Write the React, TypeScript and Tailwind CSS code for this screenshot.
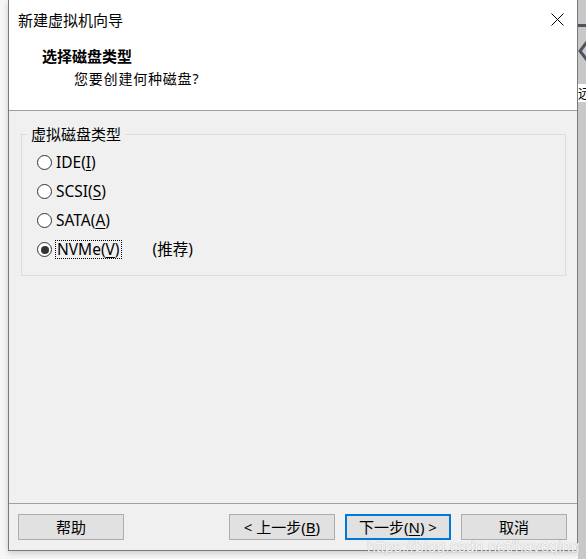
import React from 'react';

const font = { fontFamily: '"Noto Sans", "Noto Sans CJK SC", sans-serif' };

function Radio({ checked, children }: { checked?: boolean; children: React.ReactNode }) {
  return (
    <div className="flex h-[29px] items-center pl-[15px]">
      <span className="flex h-[15px] w-[15px] items-center justify-center rounded-full border border-[#333333] bg-white">
        {checked && <span className="h-[8px] w-[8px] rounded-full bg-[#333333]" />}
      </span>
      <span className="ml-[4px] flex items-center text-[15.5px] leading-none text-black">{children}</span>
    </div>
  );
}

function Btn({ children, primary }: { children: React.ReactNode; primary?: boolean }) {
  return (
    <button
      className={
        'flex h-[26px] w-[106px] items-center justify-center bg-[#e1e1e1] text-[15px] leading-none text-black ' +
        (primary ? 'border-2 border-[#0078d7]' : 'border border-[#adadad]')
      }
    >
      {children}
    </button>
  );
}

export default function App() {
  return (
    <div className="relative flex h-[559px] w-[586px] overflow-hidden bg-[#f6f6f6]" style={font}>
      <div className="w-[8px] shrink-0" />

      {/* Dialog */}
      <div className="flex h-[551px] w-[570px] shrink-0 flex-col border-x border-b border-[#7a7a7a] shadow-[0_2px_6px_rgba(0,0,0,0.18)]">
        {/* Header */}
        <div className="h-[111px] shrink-0 border-b border-[#a0a0a0] bg-white">
          <div className="flex h-[40px] items-center justify-between pl-[9px] pr-[13px]">
            <span className="text-[15px] leading-none text-black">新建虚拟机向导</span>
            <svg width="13" height="13" viewBox="0 0 13 13" className="mt-[-2px]">
              <path d="M0.5 0.5 L12.5 12.5 M12.5 0.5 L0.5 12.5" stroke="#000" strokeWidth="1" fill="none" />
            </svg>
          </div>
          <div className="mt-[6px] pl-[33px] text-[15px] font-bold leading-[20px] text-black">选择磁盘类型</div>
          <div className="mt-[3px] pl-[65px] text-[14px] leading-[20px] tracking-[0.8px] text-black">您要创建何种磁盘?</div>
        </div>

        {/* Body */}
        <div className="flex flex-1 flex-col bg-[#f0f0f0]">
          <div className="relative ml-[12px] mt-[23px] h-[142px] w-[545px] border border-[#dcdcdc]">
            <span className="absolute left-[5px] top-[-11px] bg-[#f0f0f0] px-[4px] text-[15px] leading-[20px] text-black">
              虚拟磁盘类型
            </span>
            <div className="pt-[13px]">
              <Radio>
                IDE(<span className="underline underline-offset-2">I</span>)
              </Radio>
              <Radio>
                SCSI(<span className="underline underline-offset-2">S</span>)
              </Radio>
              <Radio>
                SATA(<span className="underline underline-offset-2">A</span>)
              </Radio>
              <Radio checked>
                <span className="px-[1px] py-[1px] outline outline-1 outline-dotted outline-black">
                  NVMe(<span className="underline underline-offset-2">V</span>)
                </span>
                <span className="ml-[32px]">(推荐)</span>
              </Radio>
            </div>
          </div>

          <div className="flex-1" />

          {/* Footer */}
          <div className="flex border-t border-[#a0a0a0] pb-[10px] pl-[9px] pr-[10px] pt-[10px]">
            <Btn>帮助</Btn>
            <div className="flex-1" />
            <Btn>
              &lt; 上一步(<span className="underline underline-offset-2">B</span>)
            </Btn>
            <div className="w-[10px]" />
            <Btn primary>
              下一步(<span className="underline underline-offset-2">N</span>) &gt;
            </Btn>
            <div className="w-[10px]" />
            <Btn>取消</Btn>
          </div>
        </div>
      </div>

      {/* Background window peeking through on the right */}
      <div className="relative flex-1 bg-[#c8c8c8]">
        <div className="absolute left-0 top-[24px] h-[3px] w-full bg-[#4a5560]" />
        <svg className="absolute left-0 top-[40px]" width="9" height="22" viewBox="0 0 9 22">
          <path d="M9 2 L2 11 L9 20" stroke="#4a5560" strokeWidth="3" fill="none" />
        </svg>
        <div className="absolute left-0 top-[84px] h-[18px] w-full overflow-hidden bg-white text-[13px] leading-[18px] text-black">
          远
        </div>
      </div>

      {/* Watermark */}
      <span
        className="pointer-events-none absolute left-[367px] top-[537px] text-[16px] leading-[20px] text-white/90 [text-shadow:0_0_1px_rgba(0,0,0,0.35)]"
        style={{ fontFamily: '"Liberation Sans", Arial, sans-serif' }}
      >
        https://blog.csdn.net/haveqing
      </span>
    </div>
  );
}
